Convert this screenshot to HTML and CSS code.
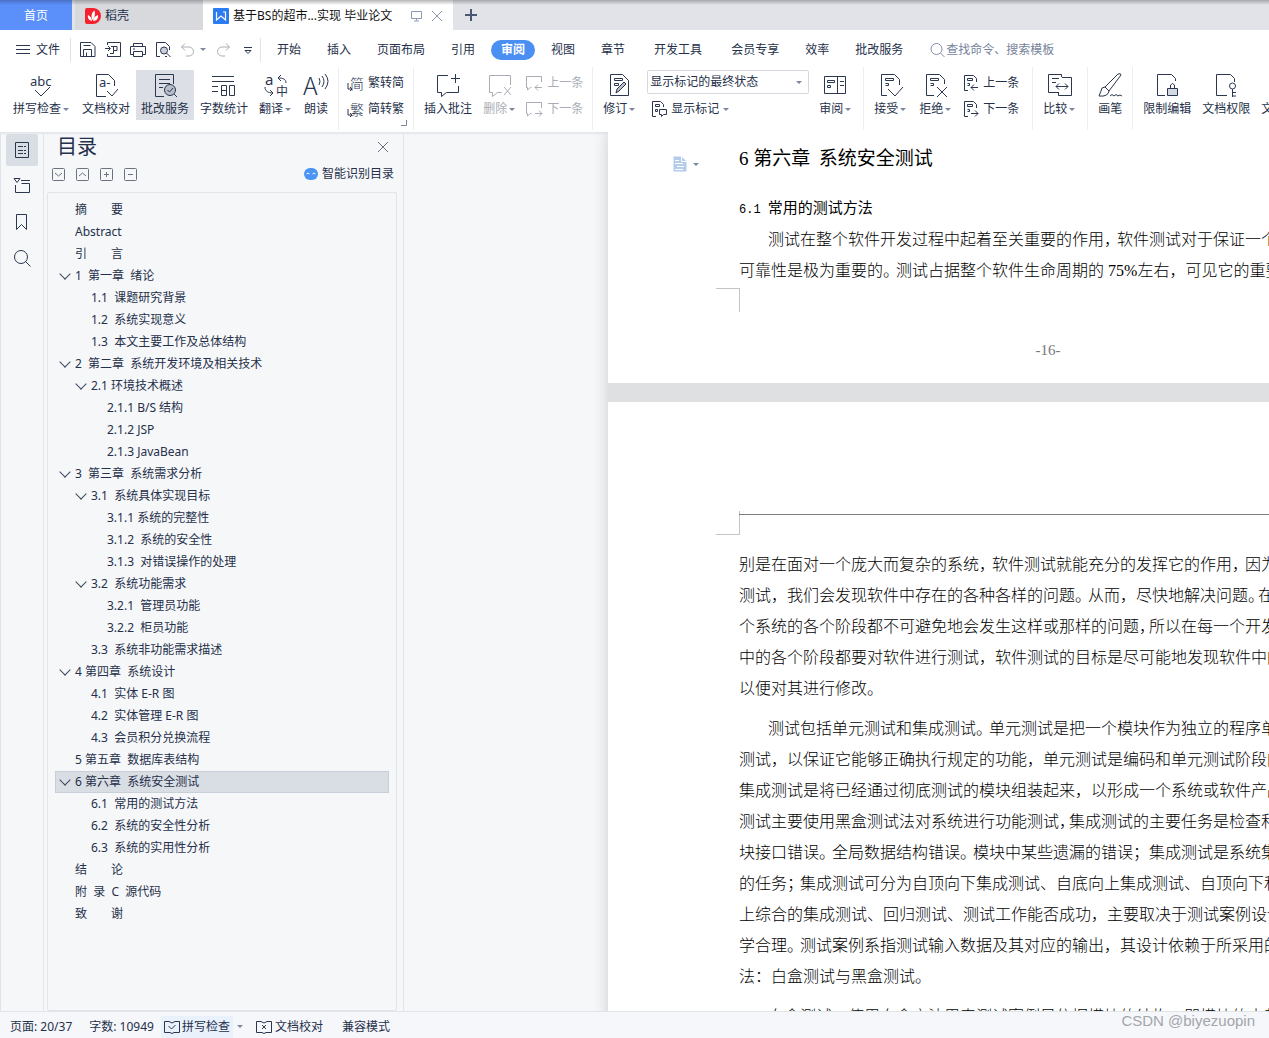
FILE: index.html
```html
<!DOCTYPE html>
<html lang="zh-CN">
<head>
<meta charset="utf-8">
<title>基于BS的超市…实现 毕业论文</title>
<link rel="stylesheet" href="styles.css">
</head>
<body>
<header class="titlebar">
  <button class="tab tab-home">首页</button>
  <button class="tab tab-store">
    <svg class="logo" width="16" height="16" viewBox="0 0 16 16"><path d="M0 2a2 2 0 0 1 2-2h6a8 8 0 0 1 0 16H2a2 2 0 0 1-2-2z" fill="#f5222d"/><path d="M7 13C3 12 2.500 9 3 7c2 1 4 3 4 6zM7.500 12C5.500 8 7 4 9.500 2.500 10.500 6 10 9 7.500 12zM8 13c0-3 2-5 5-6 .500 3-1 6-5 6z" fill="#fff"/></svg>
    <span>稻壳</span>
  </button>
  <div class="tab tab-doc">
    <svg class="logo" width="16" height="16" viewBox="0 0 16 16"><rect width="16" height="16" rx="1" fill="#2b7cf0"/><path d="M3.500 4v8L8 8l4.500 4V4H10" fill="none" stroke="#fff" stroke-width="1.200"/></svg>
    <span class="doc-name">基于BS的超市...实现 毕业论文</span>
    <svg width="12" height="12" viewBox="0 0 12 12" class="dim"><path d="M.5 1.500h10v7H.5zM5.500 8.500v2M3 11h5"/></svg>
    <button class="bare" aria-label="关闭标签"><svg width="12" height="12" viewBox="0 0 12 12" class="dim"><path d="M1 1l10 10M11 1L1 11"/></svg></button>
  </div>
  <button class="bare new-tab" aria-label="新建"><svg width="12" height="12" viewBox="0 0 12 12"><path d="M6 0v12M0 6h12" stroke="#4a5672" stroke-width="2"/></svg></button>
</header>

<nav class="menubar">
  <button class="bare file"><svg width="14" height="12" viewBox="0 0 14 12"><path d="M0 1.500h14M0 5.500h14M0 9.500h14"/></svg>文件</button>
  <span class="rule"></span>
  <div class="quick">
    <button class="bare" aria-label="保存"><svg width="16" height="16" viewBox="0 0 16 16"><path d="M.5 14.500V.5h10.500l4 4v10zM3.500 3.500h7M3.500 14V7.500h8V14M6.500 10.500v4"/></svg></button>
    <button class="bare" aria-label="输出为PDF"><svg width="16" height="16" viewBox="0 0 16 16"><path d="M2.500 3V.5h13v14h-13V12M0 6.500h5M3 4l2.500 2.500L3 9M6 4.500h6v4H8.500v3H5M8.500 4.500v4"/></svg></button>
    <button class="bare" aria-label="打印"><svg width="16" height="16" viewBox="0 0 16 16"><path d="M3.500 4V1.500h9V4M3 12.500H.5v-8h15v8H13M3.500 9.500h9v5h-9zM3 7h2"/></svg></button>
    <button class="bare" aria-label="打印预览"><svg width="16" height="16" viewBox="0 0 16 16"><path d="M5 14.500H1.500V.5h9l4 4V8M10 14.500h2"/><circle cx="9" cy="8.500" r="3.500" fill="#c9ced8"/><path d="M11.500 11l4 4"/></svg></button>
    <button class="bare" aria-label="撤销"><svg width="16" height="16" viewBox="0 0 16 16" class="off"><path d="M5 1.500L1.500 5 5 8.500M1.500 5H9a4.500 4.500 0 0 1 0 9H6"/></svg></button>
    <i class="caret"></i>
    <button class="bare redo" aria-label="恢复"><svg width="16" height="16" viewBox="0 0 16 16" class="off"><path d="M11 1.500L14.500 5 11 8.500M14.500 5H7a4.500 4.500 0 0 0 0 9h3"/></svg></button>
    <button class="bare more" aria-label="更多"><svg width="8" height="8" viewBox="0 0 8 8"><path d="M0 1.500h8M1 4.500l3 3 3-3z"/></svg></button>
  </div>
  <span class="rule"></span>
  <div class="menus">
    <a href="#">开始</a><a href="#">插入</a><a href="#">页面布局</a><a href="#">引用</a><a href="#" class="current">审阅</a><a href="#">视图</a><a href="#">章节</a><a href="#" class="spaced">开发工具</a><a href="#">会员专享</a><a href="#">效率</a><a href="#">批改服务</a>
  </div>
  <label class="search"><svg width="16" height="16" viewBox="0 0 16 16"><circle cx="6.500" cy="7" r="5.500"/><path d="M10.500 11l4 4"/></svg><input type="text" aria-label="搜索" placeholder="查找命令、搜索模板"></label>
</nav>

<section class="ribbon">
  <div class="group">
    <button class="big"><svg width="26" height="26" viewBox="0 0 26 26"><text x="1" y="14" font-size="13">abc</text><path d="M6 18l6 6 9-9"/></svg><span>拼写检查<i class="caret"></i></span></button>
    <button class="big"><svg width="26" height="26" viewBox="0 0 26 26"><path d="M13 24.500H3.500v-22h12l6 6V14M14 19l5 5 6-7"/><text x="6" y="15" font-size="13">a-</text></svg><span>文档校对</span></button>
    <button class="big active"><svg width="26" height="26" viewBox="0 0 26 26"><path d="M12 24.500H3.500v-22h18V12M7 7.500h11M7 11.500h11M7 15.500h4"/><circle cx="18" cy="18" r="5.500" fill="#b9bfca"/><path d="M15.500 18l2 2 3.500-4M22 22l3 3"/></svg><span>批改服务</span></button>
    <button class="big"><svg width="26" height="26" viewBox="0 0 26 26"><path d="M1 4.500h22M1 9.500h22M1 14.500h6M1 19.500h6M10.500 13.500h5v10h-5zM10.500 18.500h5M18.500 13.500h5v10h-5z"/></svg><span>字数统计</span></button>
    <button class="big"><svg width="26" height="26" viewBox="0 0 26 26"><text x="2" y="13" font-size="15">a</text><text x="13" y="24" font-size="12">中</text><path d="M2 15c0 4 3 6 8 6M7 18l3 3-3 3M23 11c0-4-3-5-8-5M18 3l-3 3 3 3"/></svg><span>翻译<i class="caret"></i></span></button>
    <button class="big"><svg width="26" height="26" viewBox="0 0 26 26"><text x="0" y="23" font-size="25" class="thin">A</text><path d="M16 6q2 3 0 7M19 4q4 5 0 11M22 2q6 7 0 15"/></svg><span>朗读</span></button>
  </div>
  <div class="group launch">
    <div class="pair">
      <button class="small"><svg width="17" height="17" viewBox="0 0 17 17"><text x="3" y="14" font-size="14" class="thin">简</text><path d="M1 8v6h4M3 12l2 2-2 2"/></svg>繁转简</button>
      <button class="small"><svg width="17" height="17" viewBox="0 0 17 17"><text x="3" y="14" font-size="14" class="thin">繁</text><path d="M1 8v6h4M3 12l2 2-2 2"/></svg>简转繁</button>
    </div>
    <svg class="corner" width="6" height="6" viewBox="0 0 6 6"><path d="M5.500 0v5.500H0"/></svg>
  </div>
  <div class="group comments">
    <button class="big"><svg width="26" height="26" viewBox="0 0 26 26"><path d="M13 3.500H2.500v17h4v4l5-4h12V14M20.500 2v9M16 6.500h9"/></svg><span>插入批注</span></button>
    <button class="big off"><svg width="26" height="26" viewBox="0 0 26 26"><path d="M23.500 13V3.500h-21v17h3v4l5-4h4M17 15l7 8M24 15l-7 8"/></svg><span>删除<i class="caret"></i></span></button>
    <div class="pair">
      <button class="small off"><svg width="17" height="17" viewBox="0 0 17 17"><path d="M15.500 7V1.500H.5v11h1V15l3-2.500h1M16 12.500H9M12 9.500l-3 3 3 3"/></svg>上一条</button>
      <button class="small off"><svg width="17" height="17" viewBox="0 0 17 17"><path d="M15.500 7V1.500H.5v11h1V15l3-2.500h1M9 12.500h7M13 9.500l3 3-3 3"/></svg>下一条</button>
    </div>
  </div>
  <div class="group">
    <button class="big"><svg width="26" height="26" viewBox="0 0 26 26"><path d="M3.500 2.500h12l6 6v15h-18zM7.500 6.500h8v2h-8zM7.500 11.500h4v2h-4z"/><path d="M9 21l1-4 7-7 2 2-7 7z" fill="#b9bfca"/></svg><span>修订<i class="caret"></i></span></button>
    <div class="view">
      <div class="select"><select aria-label="显示状态"><option>显示标记的最终状态</option></select><i class="caret"></i></div>
      <button class="small"><svg width="17" height="17" viewBox="0 0 17 17"><path d="M6 15.500H2.500V.5h8l3 3V6M5.500 3.500h4v2h-4zM5.500 8.500h2v2h-2zM9.500 8.500h7v5h-3l-2 2v-2h-2z"/></svg>显示标记<i class="caret"></i></button>
    </div>
    <button class="big"><svg width="26" height="26" viewBox="0 0 26 26"><path d="M1.500 4.500h21v17h-21zM14.500 4.500v17M4.500 8.500h7v2h-7zM4.500 13.500h3v2h-3zM17 9.500h4M17 13.500h4"/></svg><span>审阅<i class="caret"></i></span></button>
  </div>
  <div class="group wide-end">
    <button class="big"><svg width="26" height="26" viewBox="0 0 26 26"><path d="M9 23.500H3.500v-21h13l5 5V13M7.500 6.500h8v2h-8zM7.500 11.500h3v2h-3M10 17l7 7 8-9"/></svg><span>接受<i class="caret"></i></span></button>
    <button class="big"><svg width="26" height="26" viewBox="0 0 26 26"><path d="M11 23.500H3.500v-21h13l5 5V12M7.500 6.500h8v2h-8zM7.500 11.500h3v2h-3M14 15l10 10M24 15L14 25"/></svg><span>拒绝<i class="caret"></i></span></button>
    <div class="pair">
      <button class="small"><svg width="17" height="17" viewBox="0 0 17 17"><path d="M6 15.500H2.500V.5h9l3 3V7M5.500 3.500h5v2h-5zM5.500 8.500h2v2h-2M16 12.500H9M12 9.500l-3 3 3 3"/></svg>上一条</button>
      <button class="small"><svg width="17" height="17" viewBox="0 0 17 17"><path d="M6 15.500H2.500V.5h9l3 3V7M5.500 3.500h5v2h-5zM5.500 8.500h2v2h-2M9 12.500h7M13 9.500l3 3-3 3"/></svg>下一条</button>
    </div>
  </div>
  <div class="group">
    <button class="big"><svg width="26" height="26" viewBox="0 0 26 26"><path d="M14.500 5V2.500h-13v18h10M5 6.500h7M5 10.500h4M15 5.500h9.500v18h-13V20M9 14.500h12M12 11.500l-3 3 3 3M18 11.500l3 3-3 3"/></svg><span>比较<i class="caret"></i></span></button>
  </div>
  <div class="group">
    <button class="big"><svg width="26" height="26" viewBox="0 0 26 26"><path d="M8 15L21 2q3-1 3 1L12 19zM8 15q-4 0-4 4l-2 5q9 1 10-5zM13 24q2-3 4 0 2-3 4 0 2-2 4 0"/></svg><span>画笔</span></button>
  </div>
  <div class="group">
    <button class="big"><svg width="26" height="26" viewBox="0 0 26 26"><path d="M11 23.500H3.500v-21h14l4 4V9M16.500 16v-3q2-3 4 0v3"/><path d="M13.500 16.500h10v7h-10z" fill="#d5dae2"/></svg><span>限制编辑</span></button>
    <button class="big"><svg width="26" height="26" viewBox="0 0 26 26"><path d="M14 23.500H3.500v-21h14l4 4V10M19.500 17v8M20 20.500h3M20 24h3"/><circle cx="19.500" cy="14" r="3"/></svg><span>文档权限</span></button>
    <button class="big last"><span>文</span></button>
  </div>
</section>

<main class="workspace">
  <aside class="rail">
    <button class="active" aria-label="目录"><svg width="18" height="18" viewBox="0 0 18 18"><path d="M2.500 1.500h13v15h-13zM5 5.500h5M11 5.500h2M5 9.500h5M11 9.500h2M5 12.500h5M11 12.500h2"/></svg></button>
    <button aria-label="章节"><svg width="18" height="18" viewBox="0 0 18 18"><path d="M1 1.500h6l-3 4zM8 3.500h9M2.500 8v7.500h14V6.500h-8"/></svg></button>
    <button aria-label="书签"><svg width="18" height="18" viewBox="0 0 18 18"><path d="M3.500 1.500h10v15l-5-5-5 5z"/></svg></button>
    <button aria-label="查找"><svg width="18" height="18" viewBox="0 0 18 18"><circle cx="8" cy="8" r="6.500"/><path d="M12.500 12.500l5 5"/></svg></button>
  </aside>

  <aside class="outline">
    <div class="outline-head">
      <h1>目录</h1>
      <button class="bare" aria-label="关闭"><svg width="10" height="10" viewBox="0 0 10 10" class="grey"><path d="M0 0l10 10M10 0L0 10"/></svg></button>
    </div>
    <div class="outline-tools">
      <button class="bare" aria-label="展开"><svg width="13" height="13" viewBox="0 0 13 13" class="grey"><rect x=".5" y=".5" width="12" height="12" rx="1"/><path d="M3 5l3.500 3L10 5"/></svg></button>
      <button class="bare" aria-label="收起"><svg width="13" height="13" viewBox="0 0 13 13" class="grey"><rect x=".5" y=".5" width="12" height="12" rx="1"/><path d="M3 8l3.500-3L10 8"/></svg></button>
      <button class="bare" aria-label="增加级别"><svg width="13" height="13" viewBox="0 0 13 13" class="grey"><rect x=".5" y=".5" width="12" height="12" rx="1"/><path d="M4 6.500h5M6.500 4v5"/></svg></button>
      <button class="bare" aria-label="减少级别"><svg width="13" height="13" viewBox="0 0 13 13" class="grey"><rect x=".5" y=".5" width="12" height="12" rx="1"/><path d="M4 6.500h5"/></svg></button>
      <button class="bare smart"><svg width="14" height="12" viewBox="0 0 14 12"><rect width="14" height="12" rx="6" fill="#4a94f3" stroke="none"/><path d="M2.500 6q1.500-2 3 0M8.500 6q1.500-2 3 0" stroke="#fff"/></svg>智能识别目录</button>
    </div>
    <ul class="toc">
      <li><a href="#">摘　　要</a></li>
      <li><a href="#">Abstract</a></li>
      <li><a href="#">引　　言</a></li>
      <li class="open"><a href="#">1  第一章  绪论</a></li>
      <li class="l2"><a href="#">1.1  课题研究背景</a></li>
      <li class="l2"><a href="#">1.2  系统实现意义</a></li>
      <li class="l2"><a href="#">1.3  本文主要工作及总体结构</a></li>
      <li class="open"><a href="#">2  第二章  系统开发环境及相关技术</a></li>
      <li class="l2 open"><a href="#">2.1 环境技术概述</a></li>
      <li class="l3"><a href="#">2.1.1 B/S 结构</a></li>
      <li class="l3"><a href="#">2.1.2 JSP</a></li>
      <li class="l3"><a href="#">2.1.3 JavaBean</a></li>
      <li class="open"><a href="#">3  第三章  系统需求分析</a></li>
      <li class="l2 open"><a href="#">3.1  系统具体实现目标</a></li>
      <li class="l3"><a href="#">3.1.1 系统的完整性</a></li>
      <li class="l3"><a href="#">3.1.2  系统的安全性</a></li>
      <li class="l3"><a href="#">3.1.3  对错误操作的处理</a></li>
      <li class="l2 open"><a href="#">3.2  系统功能需求</a></li>
      <li class="l3"><a href="#">3.2.1  管理员功能</a></li>
      <li class="l3"><a href="#">3.2.2  柜员功能</a></li>
      <li class="l2"><a href="#">3.3  系统非功能需求描述</a></li>
      <li class="open"><a href="#">4 第四章  系统设计</a></li>
      <li class="l2"><a href="#">4.1  实体 E-R 图</a></li>
      <li class="l2"><a href="#">4.2  实体管理 E-R 图</a></li>
      <li class="l2"><a href="#">4.3  会员积分兑换流程</a></li>
      <li><a href="#">5 第五章  数据库表结构</a></li>
      <li class="open selected"><a href="#">6 第六章  系统安全测试</a></li>
      <li class="l2"><a href="#">6.1  常用的测试方法</a></li>
      <li class="l2"><a href="#">6.2  系统的安全性分析</a></li>
      <li class="l2"><a href="#">6.3  系统的实用性分析</a></li>
      <li><a href="#">结　　论</a></li>
      <li><a href="#">附  录  C  源代码</a></li>
      <li><a href="#">致　　谢</a></li>
    </ul>
  </aside>

  <div class="desk">
    <div class="pages">
      <article class="page first">
        <div class="para-tool"><svg width="14" height="16" viewBox="0 0 14 16"><path d="M.5.500h8l5 5v10H.5z" fill="#b5cbec" stroke="none"/><path d="M2 4.500h4M2 7.500h8M4 10.500h7M2 13.500h8M8.500.500v5h5" stroke="#fff"/></svg><i class="caret"></i></div>
        <h2><span class="serif">6 </span>第六章&nbsp; 系统安全测试</h2>
        <h3><span class="mono">6.1 </span>常用的测试方法</h3>
        <p><span class="indent"></span>测试在整个软件开发过程中起着至关重要的作用<span class="easy">，</span>软件测试对于保证一个<br>可靠性是极为重要的<span class="easy">。</span>测试占据整个软件生命周期的<span class="num"> 75%</span>左右，可见它的重要</p>
        <div class="crop-low"></div>
        <footer>-16-</footer>
      </article>
      <article class="page second">
        <div class="crop-high"></div>
        <p>别是在面对一个庞大而复杂的系统<span class="easy">，</span>软件测试就能充分的发挥它的作用<span class="easy">，</span>因为<br>测试，我们会发现软件中存在的各种各样的问题<span class="easy">。</span>从而，尽快地解决问题<span class="tight">。</span>在<br>个系统的各个阶段都不可避免地会发生这样或那样的问题<span class="tight">，</span>所以在每一个开发<br>中的各个阶段都要对软件进行测试，软件测试的目标是尽可能地发现软件中的<br>以便对其进行修改。</p>
        <p><span class="indent"></span>测试包括单元测试和集成测试<span class="easy">。</span>单元测试是把一个模块作为独立的程序单<br>测试，以保证它能够正确执行规定的功能，单元测试是编码和单元测试阶段的<br>集成测试是将已经通过彻底测试的模块组装起来，以形成一个系统或软件产品<br>测试主要使用黑盒测试法对系统进行功能测试<span class="tight">，</span>集成测试的主要任务是检查和<br>块接口错误<span class="easy">。</span>全局数据结构错误<span class="easy">。</span>模块中某些遗漏的错误；集成测试是系统集<br>的任务<span class="easy">；</span>集成测试可分为自顶向下集成测试、自底向上集成测试、自顶向下和<br>上综合的集成测试、回归测试、测试工作能否成功，主要取决于测试案例设计<br>学合理<span class="easy">。</span>测试案例系指测试输入数据及其对应的输出，其设计依赖于所采用的<br>法：白盒测试与黑盒测试。</p>
        <p><span class="indent"></span>白盒测试，使用白盒方法用来测试案例是依据模块的结构，即模块的内部</p>
      </article>
    </div>
  </div>
</main>

<footer class="status">
  <span class="cell">页面: 20/37</span>
  <span class="cell words">字数: 10949</span>
  <button class="bare spell"><svg width="16" height="14" viewBox="0 0 16 14"><path d="M5 1.500H.5v11H6l2 1 2-1h5.500v-11H11L8 3 5 1.500M4.500 6l3 3 4-4"/></svg>拼写检查</button><i class="caret"></i>
  <button class="bare proof"><svg width="16" height="14" viewBox="0 0 16 14"><path d="M5 1.500H.5v11H6l2 1 2-1h5.500v-11H11L8 3 5 1.500M6 5l4 4M10 5l-4 4"/></svg>文档校对</button>
  <span class="cell">兼容模式</span>
  <span class="mark">CSDN @biyezuopin</span>
</footer>
</body>
</html>
```
FILE: styles.css
```css
* { box-sizing: border-box; }

body {
  margin: 0;
  height: 100vh;
  display: flex;
  flex-direction: column;
  overflow: hidden;
  background: #fff;
  color: #25304a;
  font: 12px/20px "Noto Sans", "Noto Sans CJK SC", sans-serif;
}

button, input, select { font: inherit; color: inherit; }
button { border: 0; padding: 0; background: none; white-space: nowrap; }
a { color: inherit; text-decoration: none; }
svg { display: block; flex: none; overflow: visible; fill: none; stroke: #2b364f; stroke-width: 1; }
svg text { fill: #2b364f; stroke: none; }
svg .thin { font-weight: 300; font-family: "Noto Sans CJK SC", sans-serif; }
.bare { display: flex; align-items: center; }
.dim { stroke: #8d99b3; }
.grey { stroke: #6b7280; }
.off, .off svg, svg.off { color: #a9adb5; stroke: #a9adb5; }

.caret {
  flex: none;
  width: 0;
  border: 3px solid transparent;
  border-top-color: #7b86a0;
  border-bottom: 0;
}

/* window tabs */
.titlebar {
  flex: none;
  display: flex;
  height: 30px;
  background: linear-gradient(#a5a7ab, #e1e3e8 5px);
}
.tab { display: flex; align-items: center; padding-top: 2px; }
.tab-home { width: 72px; justify-content: center; color: #fff; background: linear-gradient(#4a72c4, #5b8ff9 5px); margin-right: 3px; }
.tab-store { width: 128px; padding-left: 10px; gap: 4px; background: linear-gradient(#9fa1a5, #d7d9dd 5px); }
.tab-doc { width: 250px; padding-left: 10px; background: linear-gradient(#b5b6b8, #fff 5px); }
.logo { stroke: none; }
.doc-name { width: 174px; margin: 0 4px; color: #111; white-space: nowrap; }
.tab-doc .bare { margin-left: 8px; }
.new-tab { margin-left: 12px; }

/* menu row */
.menubar { flex: none; display: flex; align-items: center; height: 37px; padding: 2px 0 0 16px; }
.file { gap: 6px; width: 54px; }
.rule { flex: none; width: 1px; height: 24px; background: #e1e3e8; }
.quick { display: flex; align-items: center; width: 189px; padding-left: 9px; gap: 9px; }
.quick .caret { margin-left: -5px; }
.more { margin-left: 4px; }
.menus { display: flex; gap: 6px; padding-left: 6px; }
.menus a { padding: 0 10px; white-space: nowrap; }
.menus .current { border-radius: 10px; background: #4a8ff2; color: #fff; font-weight: 700; }
.menus .spaced { margin: 0 3px; }
.search { display: flex; align-items: center; padding-left: 17px; }
.search svg { stroke: #8490ab; }
.search input { width: 140px; border: 0; padding: 0; outline: 0; background: none; }
.search input::placeholder { color: #76829c; opacity: 1; }

/* ribbon */
.ribbon {
  flex: none;
  display: flex;
  height: 65px;
  padding-left: 3px;
  overflow: hidden;
}
.group { position: relative; flex: none; display: flex; gap: 1px; padding: 3px 5px 0; height: 63px; border-right: 1px solid #eceef1; }
.group:last-child { border: 0; }
.wide-end { padding-right: 10px; }
.launch, .comments { padding-right: 6px; }
.big { display: flex; flex-direction: column; align-items: center; height: 50px; padding: 2px 5px 0; }
.big svg { margin: 0 -1px; }
.big span { display: flex; align-items: center; height: 26px; }
.big .caret { margin: 0 2px; }
.big.active { background: #dce0e6; }
.big.last { padding-top: 28px; }
.pair { display: grid; grid-template-rows: 26px 26px; }
.small { display: flex; align-items: center; gap: 4px; padding: 0 3px; }
.corner { position: absolute; right: 6px; bottom: 4px; stroke: #7b86a0; }
.view { display: grid; grid-template-rows: 26px 26px; width: 162px; margin: 0 4px; }
.select { display: grid; grid-template-columns: 1fr 12px; align-items: center; height: 24px; border: 1px solid #d5d8de; border-radius: 2px; }
.select select { grid-area: 1 / 1 / 2 / 3; appearance: none; border: 0; padding: 0 2px; background: none; outline: 0; }
.select .caret { grid-area: 1 / 2; }

/* workspace */
.workspace {
  flex: 1;
  min-height: 0;
  display: flex;
  background: #f6f7f9;
  box-shadow: inset 0 2px 2px #e4e6ea;
}
.rail { flex: none; width: 44px; padding: 2px 5px; display: flex; flex-direction: column; gap: 4px; border: solid #e1e4e9; border-width: 0 1px; }
.rail button { display: grid; place-items: center; height: 32px; border-radius: 2px; }
.rail .active { background: #d9dde4; }

.outline { flex: none; width: 360px; padding: 0 6px 0 3px; display: flex; flex-direction: column; border-right: 1px solid #e1e4e9; }
.outline-head { display: flex; align-items: center; justify-content: space-between; height: 30px; padding: 0 9px 0 10px; }
.outline-head h1 { margin: 0; font-size: 20px; font-weight: 400; }
.outline-tools { display: flex; gap: 11px; height: 30px; padding: 0 3px 6px 5px; align-items: center; }
.smart { margin-left: auto; gap: 4px; }
.toc { flex: 1; min-height: 0; margin: 0; padding: 6px 7px; list-style: none; border: 1px solid #e1e4e9; border-radius: 2px; }
.toc li { display: flex; align-items: center; height: 22px; padding-left: 20px; white-space: pre; }
.toc .l2 { padding-left: 36px; }
.toc .l3 { padding-left: 52px; }
.toc .open::before {
  content: "";
  width: 7px;
  height: 7px;
  margin: -4px 6px 0 -14px;
  border: solid #3c4760;
  border-width: 0 1px 1px 0;
  transform: rotate(45deg);
}
.toc .selected { background: #d9dde4; outline: 1px solid #c8cfd8; outline-offset: -1px; }

/* document */
.desk { flex: 1; min-width: 0; overflow: hidden; padding-left: 204px; }
.pages {
  width: 880px;
  display: flex;
  flex-direction: column;
  gap: 19px;
  background: #dfe0e2;
  box-shadow: 0 0 14px #c9cbcf;
  color: #000;
  font-family: "Liberation Serif", "Noto Sans CJK SC", serif;
}
.page { position: relative; padding: 0 131px; background: #fff; }
.page p { margin: 0 0 9px; font-size: 16px; line-height: 31px; font-weight: 300; white-space: nowrap; }
.indent { display: inline-block; width: 29px; }
.tight, .easy { font-feature-settings: "halt"; margin-right: 2px; }
.easy { margin-right: 5px; }
.num { font-weight: 400; }
.page h2 { margin: 0; padding-top: 11px; font: 400 19px/28px "Noto Sans CJK SC", sans-serif; }
.page h3 { margin: 0; padding: 24px 0 4px; font: 400 15px/20px "Noto Sans CJK SC", sans-serif; }
.serif { font-family: "Liberation Serif", serif; }
.mono { font-family: "Liberation Mono", monospace; font-size: 12px; }
.first { height: 251px; }
.first p { margin: 0 0 2px; }
.para-tool { position: absolute; left: 65px; top: 24px; display: flex; align-items: center; gap: 6px; }
.crop-low, .crop-high { width: 24px; margin-left: -23px; height: 24px; border: solid #c4c4c4; }
.crop-low { border-width: 1px 1px 0 0; }
.crop-high { border-width: 0 1px 1px 0; }
.first footer { padding-top: 28px; text-align: center; font-size: 15px; color: #777; }
.second { padding-top: 109px; }
.second .crop-high { margin-bottom: 14px; }
.second::before { content: ""; position: absolute; left: 131px; right: 131px; top: 112px; border-top: 1px solid #7d7d7d; }

/* status bar */
.status { flex: none; display: flex; align-items: center; height: 27px; padding: 3px 14px 0 10px; background: #f5f7fa; border-top: 1px solid #e1e4e9; white-space: nowrap; }
.words { margin: 0 7px 0 17px; }
.spell { gap: 2px; padding: 0 3px; height: 22px; background: #e8f1fc; }
.status .caret { margin: 0 13px 0 4px; }
.proof { gap: 3px; margin-right: 19px; }
.mark { align-self: flex-start; margin: -4px 0 0 auto; font: 15px/20px "Liberation Sans", sans-serif; color: #a3a6ab; }
```
